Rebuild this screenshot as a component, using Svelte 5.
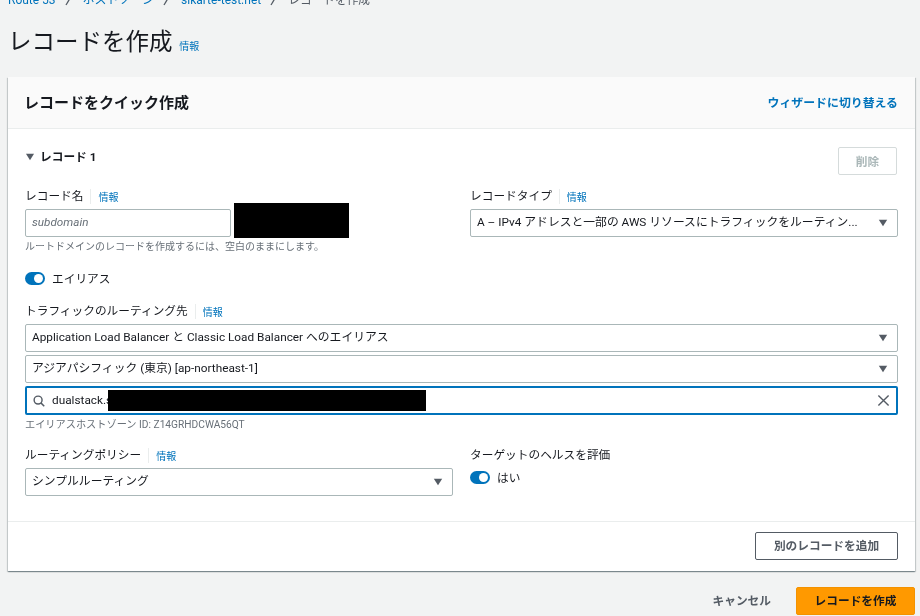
{#snippet info()}<span class="info">情報</span>{/snippet}
{#snippet caret()}
  <svg class="caret" viewBox="0 0 12 10" width="12" height="10" aria-hidden="true"><path d="M1.800 1.800h8.400L6 8.200z" fill="#545b64"/></svg>
{/snippet}
{#snippet toggle()}
  <span class="toggle"><span class="knob"></span></span>
{/snippet}
{#snippet sep()}
  <svg class="sep" viewBox="0 0 8 12" width="8" height="12" aria-hidden="true"><path d="M1 11 7 1" stroke="#545b64" stroke-width="1.300" fill="none"/></svg>
{/snippet}

<div class="page">
  <nav class="crumbs">
    <span class="link">Route 53</span>{@render sep()}
    <span class="link">ホストゾーン</span>{@render sep()}
    <span class="link">sikarte-test.net</span>{@render sep()}
    <span class="cur">レコードを作成</span>
  </nav>
  <h1 class="title">レコードを作成 <span class="info big">情報</span></h1>

  <section class="card">
    <header class="head">
      <h2>レコードをクイック作成</h2>
      <span class="switch">ウィザードに切り替える</span>
    </header>
    <div class="body">
      <div class="rec-row">
        <div class="rec-title">
          <svg viewBox="0 0 10 8" width="10" height="8" aria-hidden="true"><path d="M1 0.800h8L5 7.200z" fill="#545b64"/></svg>
          <span>レコード 1</span>
        </div>
        <button class="btn disabled">削除</button>
      </div>
      <div class="cols first">
        <div>
          <div class="label"><span class="ltxt">レコード名</span>{@render info()}</div>
          <div class="name-row">
            <div class="box name"><i>subdomain</i></div>
            <div class="redact r1"></div>
          </div>
          <div class="hint root">ルートドメインのレコードを作成するには、空白のままにします。</div>
        </div>
        <div>
          <div class="label"><span class="ltxt">レコードタイプ</span>{@render info()}</div>
          <div class="box sel"><span class="val">A – IPv4 アドレスと一部の AWS リソースにトラフィックをルーティン...</span>{@render caret()}</div>
        </div>
      </div>
      <div class="toggle-row alias">{@render toggle()}<span>エイリアス</span></div>
      <div class="label traffic"><span class="ltxt">トラフィックのルーティング先</span>{@render info()}</div>
      <div class="stack">
        <div class="box sel"><span class="val">Application Load Balancer と Classic Load Balancer へのエイリアス</span>{@render caret()}</div>
        <div class="box sel"><span class="val">アジアパシフィック (東京) [ap-northeast-1]</span>{@render caret()}</div>
        <div class="box sel focus">
          <svg viewBox="0 0 16 16" width="12" height="12" aria-hidden="true"><circle cx="6.800" cy="6.800" r="5.300" fill="none" stroke="#545b64" stroke-width="1.900"/><path d="M10.500 10.500 15 15" stroke="#545b64" stroke-width="1.900"/></svg>
          <span class="val query">dualstack.s</span>
          <div class="redact r2"></div>
          <svg class="clear" viewBox="0 0 14 14" width="13" height="13" aria-hidden="true"><path d="M1.500 1.500l11 11M12.500 1.500l-11 11" stroke="#545b64" stroke-width="1.500"/></svg>
        </div>
      </div>
      <div class="hint zone">エイリアスホストゾーン ID: Z14GRHDCWA56QT</div>
      <div class="cols policy">
        <div>
          <div class="label"><span class="ltxt">ルーティングポリシー</span>{@render info()}</div>
          <div class="box sel"><span class="val">シンプルルーティング</span>{@render caret()}</div>
        </div>
        <div>
          <div class="label"><span class="ltxt plain">ターゲットのヘルスを評価</span></div>
          <div class="toggle-row yes">{@render toggle()}<span>はい</span></div>
        </div>
      </div>
    </div>
    <footer class="foot">
      <button class="btn">別のレコードを追加</button>
    </footer>
  </section>

  <div class="actions">
    <span class="cancel">キャンセル</span>
    <button class="btn primary">レコードを作成</button>
  </div>
</div>

<style>
  :global(body) {
    margin: 0;
    background: #f2f3f3;
  }
  .page {
    box-sizing: border-box;
    width: 920px;
    height: 616px;
    overflow: hidden;
    padding: 0 5px 0 8px;
    font-family: Roboto, "Noto Sans CJK JP", sans-serif;
    font-size: 11.700px;
    color: #16191f;
    filter: blur(0.5px);
  }
  .crumbs {
    display: flex;
    align-items: center;
    gap: 9px;
    height: 16px;
    margin-top: -8px;
    line-height: 16px;
    font-size: 12px;
    white-space: nowrap;
  }
  .crumbs .sep { margin-right: 1px; }
  .link { color: #0073bb; }
  .cur { color: #545b64; font-size: 11.700px; }
  .title {
    margin: 16px 0 0 0;
    height: 53px;
    line-height: 36px;
    font-size: 23.500px;
    font-weight: 400;
    color: #16191f;
  }
  .info {
    color: #0073bb;
    font-size: 10px;
    font-weight: 400;
  }
  .info.big { margin-left: 1px; }
  .card {
    background: #fff;
    height: 494px;
    box-shadow: 0 1px 1px 0 rgba(0, 28, 36, 0.3), 1px 1px 1px 0 rgba(0, 28, 36, 0.15), -1px 1px 1px 0 rgba(0, 28, 36, 0.15);
    display: flex;
    flex-direction: column;
  }
  .head {
    height: 52px;
    box-sizing: border-box;
    background: #fafafa;
    border-bottom: 1px solid #eaeded;
    display: flex;
    align-items: center;
    justify-content: space-between;
    padding: 0 17px;
  }
  h2 {
    margin: 0 0 3px -1px;
    font-size: 15px;
    font-weight: 700;
  }
  .switch {
    color: #0073bb;
    font-weight: 700;
    font-size: 11.900px;
    margin-bottom: 2px;
  }
  .body {
    flex: 1;
    padding: 18px 17px 0;
  }
  .rec-row {
    display: flex;
    justify-content: space-between;
    height: 28px;
  }
  .rec-title {
    display: flex;
    align-items: center;
    gap: 5px;
    height: 20px;
    font-weight: 700;
    color: #16191f;
  }
  .rec-title span { margin-bottom: 3px; }
  .btn {
    box-sizing: border-box;
    height: 28px;
    font: inherit;
    font-weight: 700;
    border-radius: 2px;
    background: #fff;
    color: #545b64;
    border: 1px solid #545b64;
    padding: 0 0 4px;
  }
  .btn.disabled {
    width: 59px;
    margin-right: 1px;
    padding-bottom: 2px;
    color: #aab7b8;
    border-color: #d5dbdb;
  }
  .cols {
    display: grid;
    grid-template-columns: 428px 428px;
    column-gap: 17px;
  }
  .first { margin-top: 12px; }
  .label {
    display: flex;
    align-items: center;
    height: 18px;
    margin-bottom: 4px;
    color: #16191f;
  }
  .ltxt {
    border-right: 1px solid #eaeded;
    padding-right: 7px;
    margin-right: 7px;
    line-height: 15px;
  }
  .ltxt.plain { border: 0; }
  .box {
    box-sizing: border-box;
    height: 28px;
    background: #fff;
    border: 1px solid #aab7b8;
    border-radius: 2px;
    display: flex;
    align-items: center;
    padding: 0 8px 0 6px;
    white-space: nowrap;
  }
  .name-row {
    display: flex;
    gap: 3px;
    align-items: flex-end;
    height: 28px;
  }
  .name {
    width: 206px;
    color: #687078;
    flex: none;
  }
  .name i { margin-bottom: 2px; }
  .redact { background: #000; flex: none; }
  .r1 {
    width: 115px;
    height: 35px;
    margin-bottom: -1px;
  }
  .sel { justify-content: space-between; }
  .val {
    overflow: hidden;
    font-size: 11.800px;
    line-height: 16px;
    margin-bottom: 2px;
  }
  .hint {
    height: 16px;
    line-height: 16px;
    margin-top: 1px;
    font-size: 10px;
    color: #687078;
  }
  .root {
    height: 15px;
    margin-top: 2px;
  }
  .toggle-row {
    display: flex;
    align-items: center;
    gap: 7px;
    height: 18px;
  }
  .toggle-row > span:last-child { margin-bottom: 2px; }
  .alias { margin-top: 15px; }
  .toggle {
    display: block;
    position: relative;
    flex: none;
    width: 20px;
    height: 13px;
    border-radius: 7px;
    background: #0073bb;
  }
  .knob {
    position: absolute;
    right: 2px;
    top: 2px;
    width: 9px;
    height: 9px;
    border-radius: 50%;
    background: #fff;
  }
  .traffic { margin-top: 15px; margin-bottom: 4px; }
  .stack {
    display: flex;
    flex-direction: column;
    gap: 3px;
  }
  .focus {
    height: 29px;
    border: 2px solid #0073bb;
    padding: 0 6px;
    justify-content: flex-start;
    gap: 7px;
    position: relative;
  }
  .query {
    flex: none;
    margin-bottom: 1px;
  }
  .r2 {
    position: absolute;
    left: 81px;
    top: 2px;
    width: 318px;
    height: 21px;
  }
  .clear { margin-left: auto; }
  .zone { margin-top: 2px; font-size: 10.200px; }
  .policy { margin-top: 13px; }
  .yes { margin-top: 0; }
  .foot {
    height: 50px;
    box-sizing: border-box;
    border-top: 1px solid #eaeded;
    display: flex;
    justify-content: flex-end;
    padding: 10px 17px 0;
  }
  .foot .btn { width: 143px; }
  .actions {
    display: flex;
    justify-content: flex-end;
    align-items: center;
    gap: 25px;
    margin-top: 16px;
  }
  .cancel {
    color: #545b64;
    font-weight: 700;
    margin-bottom: 4px;
  }
  .primary {
    width: 119px;
    height: 28px;
    background: #ff9900;
    border: 1px solid #f39200;
    color: #16191f;
  }
</style>
